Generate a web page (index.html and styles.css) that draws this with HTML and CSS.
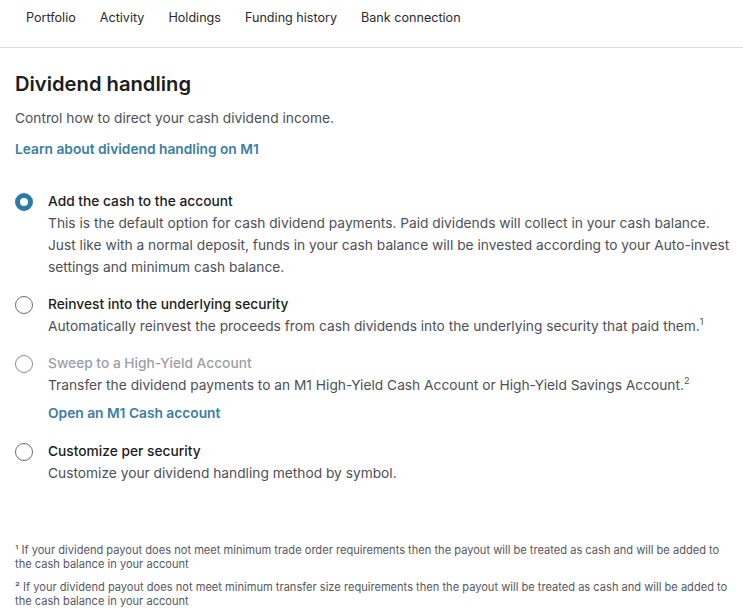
FILE: index.html
```html
<!DOCTYPE html>
<html>
<head>
<meta charset="utf-8">
<link rel="stylesheet" href="styles.css">
</head>
<body>
<nav class="tabs">
  <a class="tab">Portfolio</a>
  <a class="tab">Activity</a>
  <a class="tab">Holdings</a>
  <a class="tab">Funding history</a>
  <a class="tab">Bank connection</a>
</nav>
<main class="content">
  <h1 class="title">Dividend handling</h1>
  <p class="intro">Control how to direct your cash dividend income.</p>
  <a class="link learn">Learn about dividend handling on M1</a>
  <div class="options">
    <div class="option">
      <span class="radio checked"></span>
      <div class="opt-body">
        <div class="opt-title">Add the cash to the account</div>
        <div class="opt-desc">This is the default option for cash dividend payments. Paid dividends will collect in your cash balance. Just like with a normal deposit, funds in your cash balance will be invested according to your Auto-invest settings and minimum cash balance.</div>
      </div>
    </div>
    <div class="option">
      <span class="radio"></span>
      <div class="opt-body">
        <div class="opt-title">Reinvest into the underlying security</div>
        <div class="opt-desc">Automatically reinvest the proceeds from cash dividends into the underlying security that paid them.<sup>1</sup></div>
      </div>
    </div>
    <div class="option">
      <span class="radio disabled"></span>
      <div class="opt-body">
        <div class="opt-title muted">Sweep to a High-Yield Account</div>
        <div class="opt-desc">Transfer the dividend payments to an M1 High-Yield Cash Account or High-Yield Savings Account.<sup>2</sup></div>
        <a class="link opt-link">Open an M1 Cash account</a>
      </div>
    </div>
    <div class="option">
      <span class="radio"></span>
      <div class="opt-body">
        <div class="opt-title">Customize per security</div>
        <div class="opt-desc">Customize your dividend handling method by symbol.</div>
      </div>
    </div>
  </div>
  <div class="footnotes">
    <p class="note">¹ If your dividend payout does not meet minimum trade order requirements then the payout will be treated as cash and will be added to the cash balance in your account</p>
    <p class="note">² If your dividend payout does not meet minimum transfer size requirements then the payout will be treated as cash and will be added to the cash balance in your account</p>
  </div>
</main>
</body>
</html>
```
FILE: styles.css
```css
html, body {
  margin: 0;
  padding: 0;
  background: #ffffff;
  font-family: Inter, "Noto Sans", sans-serif;
  color: #1f2023;
}
.tabs {
  display: flex;
  gap: 24px;
  padding: 0 0 12px 26px;
  height: 35px;
  align-items: center;
  border-bottom: 1px solid #dcdde0;
}
.tab {
  font-size: 12.6px;
  color: #2a2b2e;
}
.content {
  padding: 0 8px 0 15px;
}
.title {
  margin: 22px 0 0;
  font-size: 20.2px;
  font-weight: 600;
  line-height: 28px;
  color: #1c1d20;
}
.intro {
  margin: 10px 0 0;
  font-size: 13.75px;
  line-height: 20px;
  color: #4d5058;
}
.link {
  display: block;
  font-size: 13.75px;
  font-weight: 600;
  color: #3b7ea3;
  line-height: 20px;
}
.learn {
  margin-top: 11px;
}
.options {
  margin-top: 32px;
  display: flex;
  flex-direction: column;
  gap: 16px;
}
.option {
  display: flex;
  gap: 15px;
  align-items: flex-start;
}
.radio {
  flex: none;
  box-sizing: border-box;
  width: 18px;
  height: 18px;
  border-radius: 50%;
  border: 1px solid #6a6c70;
  margin-top: 2px;
}
.radio.checked {
  border: 5px solid #2d7aa6;
}
.radio.disabled {
  border-color: #8b8d92;
}
.opt-title {
  font-size: 13.75px;
  font-weight: 500;
  line-height: 21px;
  color: #1c1d20;
}
.opt-title.muted {
  color: #9ba0a8;
}
.opt-desc {
  font-size: 13.75px;
  line-height: 22px;
  color: #4d5058;
}
.opt-desc sup {
  font-size: 9px;
  line-height: 0;
}
.opt-link {
  margin-top: 7px;
  margin-bottom: 2px;
}
.footnotes {
  margin-top: 59px;
}
.note {
  margin: 0 0 9px;
  font-size: 11.1px;
  line-height: 14px;
  color: #55585f;
}
```
